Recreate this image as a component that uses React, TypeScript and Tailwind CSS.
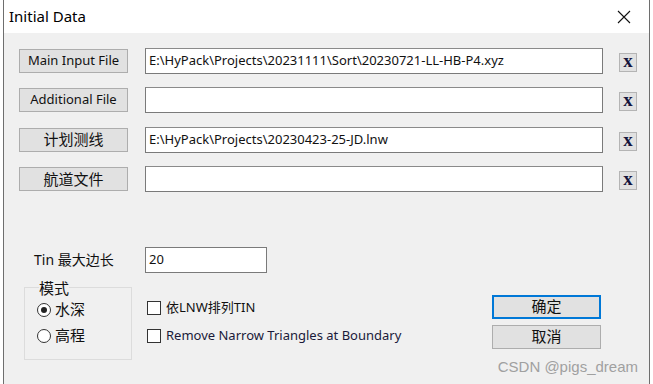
import React from "react";

const FONT = { fontFamily: '"Noto Sans", "Noto Sans CJK SC", sans-serif' };

function FileRow({ label, value, cjk }: { label: string; value: string; cjk?: boolean }) {
  return (
    <div className="flex items-center h-[25px]">
      <div
        className={
          "w-[109px] h-[24px] border border-[#adadad] bg-[#e1e1e1] flex items-center justify-center text-[#111] " +
          (cjk ? "text-[15px]" : "text-[13px]")
        }
      >
        {label}
      </div>
      <div className="ml-[17px] w-[458px] h-[26px] border border-[#7a7a7a] border-t-[#8a8a8a] bg-white flex items-center pl-[3px] text-[13px] text-[#111] whitespace-nowrap overflow-hidden">
        {value}
      </div>
      <div className="ml-[16px] mt-[3px] w-[18px] h-[19px] border border-[#b4b4b4] bg-[#e1e1e1] flex items-center justify-center">
        <span className="text-[19px] font-bold leading-none text-[#14143c] -mt-[4px]" style={{ fontFamily: '"Liberation Serif", serif' }}>
          x
        </span>
      </div>
    </div>
  );
}

function Radio({ checked, label }: { checked: boolean; label: string }) {
  return (
    <div className="flex items-center h-[16px]">
      <div className="w-[14px] h-[14px] rounded-full border border-[#333] bg-white flex items-center justify-center">
        {checked && <div className="w-[6px] h-[6px] rounded-full bg-[#222]" />}
      </div>
      <span className="ml-[4px] text-[15px] text-[#111]">{label}</span>
    </div>
  );
}

function Check({ label, cls }: { label: string; cls?: string }) {
  return (
    <div className="flex items-center h-[16px]">
      <div className="w-[14px] h-[14px] border border-[#333] bg-white" />
      <span className={"ml-[5px] text-[13px] whitespace-nowrap " + (cls ?? "text-[#111]")}>{label}</span>
    </div>
  );
}

export default function App() {
  return (
    <div className="w-[653px] h-[384px] flex bg-white overflow-hidden" style={FONT}>
      <div className="w-[3px] bg-white" />
      <div className="w-[647px] h-full flex flex-col border-l border-r border-[#6e6e6e] relative">
        <div className="h-[33px] bg-white flex items-center justify-between pl-[5px] pr-[18px]">
          <span className="text-[15px] text-black">Initial Data</span>
          <svg width="14" height="14" viewBox="0 0 14 14">
            <path d="M1 1 L13 13 M13 1 L1 13" stroke="#111" strokeWidth="1.1" fill="none" />
          </svg>
        </div>
        <div className="flex-1 bg-[#f0f0f0] flex flex-col pt-[15px] pl-[15px]">
          <div className="flex flex-col gap-[14.5px]">
            <FileRow label="Main Input File" value="E:\HyPack\Projects\20231111\Sort\20230721-LL-HB-P4.xyz" />
            <FileRow label="Additional File" value="" />
            <FileRow cjk label="计划测线" value="E:\HyPack\Projects\20230423-25-JD.lnw" />
            <FileRow cjk label="航道文件" value="" />
          </div>
          <div className="flex items-center mt-[55px] h-[26px]">
            <span className="ml-[15px] w-[111px] text-[14px] text-[#111]">Tin 最大边长</span>
            <div className="w-[122px] h-[26px] border border-[#7a7a7a] bg-white flex items-center pl-[3px] text-[13px] text-[#111]">
              20
            </div>
          </div>
          <div className="flex mt-[7px]">
            <fieldset className="ml-[5px] w-[108px] h-[80px] border border-[#dcdcdc] px-[12px] pt-[6px]">
              <legend className="ml-[2px] text-[15px] text-[#111] leading-[16px]">模式</legend>
              <div className="flex flex-col gap-[10px]">
                <Radio checked label="水深" />
                <Radio checked={false} label="高程" />
              </div>
            </fieldset>
            <div className="ml-[15px] w-[345px] mt-[20px] flex flex-col gap-[12px]">
              <Check label="依LNW排列TIN" />
              <Check label="Remove Narrow Triangles at Boundary" cls="text-[#1a1a3a]" />
            </div>
            <div className="mt-[15px] flex flex-col gap-[6px]">
              <div className="w-[109px] h-[24px] border-2 border-[#0078d7] bg-[#e1e1e1] flex items-center justify-center text-[15px] text-[#111]">
                确定
              </div>
              <div className="w-[109px] h-[24px] border border-[#adadad] bg-[#e1e1e1] flex items-center justify-center text-[15px] text-[#111]">
                取消
              </div>
            </div>
          </div>
        </div>
        <div
          className="absolute right-[11px] bottom-[10px] text-[15px] leading-none text-[#a0a0a0]"
          style={{ fontFamily: '"Liberation Sans", sans-serif' }}
        >
          CSDN @pigs_dream
        </div>
      </div>
      <div className="w-[3px] bg-white" />
    </div>
  );
}
